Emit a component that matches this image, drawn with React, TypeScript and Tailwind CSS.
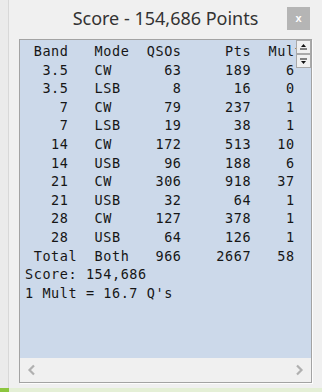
import React from 'react'

const lines = [
  ' Band   Mode  QSOs     Pts  Mult',
  '  3.5   CW      63     189    6',
  '  3.5   LSB      8      16    0',
  '    7   CW      79     237    1',
  '    7   LSB     19      38    1',
  '   14   CW     172     513   10',
  '   14   USB     96     188    6',
  '   21   CW     306     918   37',
  '   21   USB     32      64    1',
  '   28   CW     127     378    1',
  '   28   USB     64     126    1',
  ' Total  Both   966    2667   58',
  'Score: 154,686',
  "1 Mult = 16.7 Q's",
]

function SpinButton({ up }: { up?: boolean }) {
  return (
    <div className="w-[15px] h-[14px] bg-[#f0f0f0] border border-[#a9a9a9] flex items-center justify-center">
      <svg width="9" height="8" viewBox="0 0 9 8">
        {up ? (
          <>
            <path d="M4.5 1 L7 4 L2 4 Z" fill="#111" />
            <rect x="1" y="5.5" width="7" height="1" fill="#111" />
          </>
        ) : (
          <>
            <rect x="1" y="1.5" width="7" height="1" fill="#111" />
            <path d="M2 4 L7 4 L4.5 7 Z" fill="#111" />
          </>
        )}
      </svg>
    </div>
  )
}

export default function App() {
  return (
    <div className="w-[322px] h-[392px] bg-[#f0f0f0] flex flex-col overflow-hidden">
      <div className="flex flex-1 min-h-0">
        {/* neighbouring pane edge */}
        <div className="w-[8px] bg-[#ebebeb] border-r border-[#d8d8d8] box-content" />

        <div className="flex-1 flex flex-col">
          {/* title bar */}
          <div className="h-[39px] grid grid-cols-[1fr_auto_1fr] items-start">
            <div />
            <div
              className="pt-[6px] text-[18px] leading-[24px] text-[#333]"
              style={{ fontFamily: '"Noto Sans", "Open Sans", sans-serif' }}
            >
              Score - 154,686 Points
            </div>
            <div className="flex justify-end pr-[12px] pt-[7px]">
              <div className="w-[23px] h-[23px] bg-[#b5b5b5] flex items-center justify-center text-white text-[11px] font-bold leading-none"
                style={{ fontFamily: '"Liberation Sans", Arial, sans-serif' }}>
                x
              </div>
            </div>
          </div>

          {/* score panel */}
          <div className="mx-[10px] h-[344px] border border-[#a3a3a3] flex flex-col shadow-[1px_1px_0_#fdfdfd]">
            <div className="relative flex-1 bg-[#ccd9ea] overflow-hidden">
              <pre
                className="pl-[5px] pt-[2px] text-[13.5px] leading-[18.6px] tracking-[0.57px] text-[#161616]"
                style={{ fontFamily: '"DejaVu Sans Mono", "Liberation Mono", monospace' }}
              >
                {lines.join('\n')}
              </pre>
              <div className="absolute top-0 right-0 flex flex-col">
                <SpinButton up />
                <SpinButton />
              </div>
            </div>
            <div className="h-[24px] bg-[#f0f0f0] flex items-center justify-between px-[7px]">
              <svg width="10" height="12" viewBox="0 0 10 12">
                <path d="M7 1.5 L2.5 6 L7 10.5" fill="none" stroke="#b0b0b0" strokeWidth="2.2" />
              </svg>
              <svg width="10" height="12" viewBox="0 0 10 12">
                <path d="M3 1.5 L7.5 6 L3 10.5" fill="none" stroke="#b0b0b0" strokeWidth="2.2" />
              </svg>
            </div>
          </div>
        </div>
      </div>

      {/* status strip */}
      <div className="h-[4px] flex">
        <div className="w-[9px] bg-[#8cc63f]" />
        <div className="flex-1 bg-[#e4efd6]" />
      </div>
    </div>
  )
}
